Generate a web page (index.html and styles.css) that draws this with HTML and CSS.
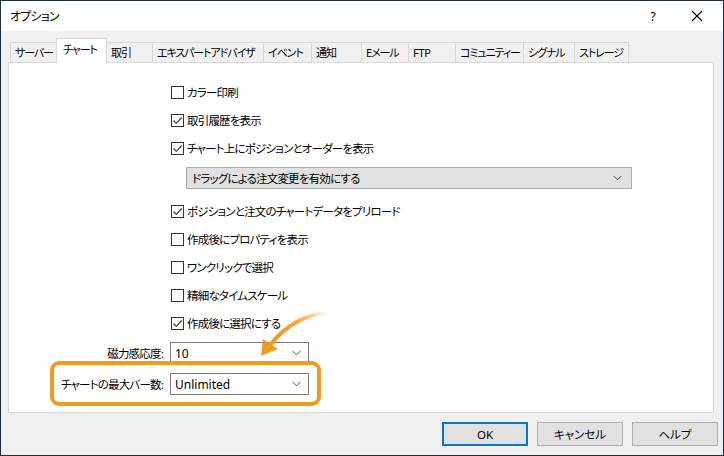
FILE: index.html
```html
<!DOCTYPE html>
<html lang="ja">
<head>
<meta charset="utf-8">
<title>オプション</title>
<link rel="stylesheet" href="styles.css">
</head>
<body>
<div class="window">
  <div class="titlebar">
    <span class="title">オプション</span>
    <span class="tb-help">?</span>
    <span class="tb-close"><svg width="12" height="12" viewBox="0 0 12 12"><path d="M1 1L11 11M11 1L1 11" stroke="#000" stroke-width="1.1" fill="none"/></svg></span>
  </div>
  <div class="content">
    <div class="tabs">
      <div class="tab t-server">サーバー</div>
      <div class="tab t-chart active">チャート</div>
      <div class="tab t-trade">取引</div>
      <div class="tab t-ea">エキスパートアドバイザ</div>
      <div class="tab t-event">イベント</div>
      <div class="tab t-notify">通知</div>
      <div class="tab t-mail">Eメール</div>
      <div class="tab t-ftp">FTP</div>
      <div class="tab t-comm">コミュニティー</div>
      <div class="tab t-signal">シグナル</div>
      <div class="tab t-storage">ストレージ</div>
    </div>
    <div class="panel">
      <div class="checks">
        <div class="row"><span class="box"></span><span>カラー印刷</span></div>
        <div class="row"><span class="box"><svg viewBox="0 0 11 11" width="11" height="11"><path d="M1.5 5.5L4.2 8.3L9.8 2.5" stroke="#333" stroke-width="1.1" fill="none"/></svg></span><span>取引履歴を表示</span></div>
        <div class="row"><span class="box"><svg viewBox="0 0 11 11" width="11" height="11"><path d="M1.5 5.5L4.2 8.3L9.8 2.5" stroke="#333" stroke-width="1.1" fill="none"/></svg></span><span>チャート上にポジションとオーダーを表示</span></div>
        <div class="combo wide"><span>ドラッグによる注文変更を有効にする</span><svg class="chev" width="9" height="6" viewBox="0 0 9 6"><path d="M0.5 0.8L4.5 4.8L8.5 0.8" stroke="#555" stroke-width="1" fill="none"/></svg></div>
        <div class="row"><span class="box"><svg viewBox="0 0 11 11" width="11" height="11"><path d="M1.5 5.5L4.2 8.3L9.8 2.5" stroke="#333" stroke-width="1.1" fill="none"/></svg></span><span>ポジションと注文のチャートデータをプリロード</span></div>
        <div class="row"><span class="box"></span><span>作成後にプロパティを表示</span></div>
        <div class="row"><span class="box"></span><span>ワンクリックで選択</span></div>
        <div class="row"><span class="box"></span><span>精細なタイムスケール</span></div>
        <div class="row"><span class="box"><svg viewBox="0 0 11 11" width="11" height="11"><path d="M1.5 5.5L4.2 8.3L9.8 2.5" stroke="#333" stroke-width="1.1" fill="none"/></svg></span><span>作成後に選択にする</span></div>
      </div>
      <div class="fields">
        <div class="field">
          <span class="label">磁力感応度:</span>
          <div class="select"><span>10</span><svg class="chev" width="9" height="6" viewBox="0 0 9 6"><path d="M0.5 0.8L4.5 4.8L8.5 0.8" stroke="#555" stroke-width="1" fill="none"/></svg></div>
        </div>
        <div class="field highlighted">
          <span class="label">チャートの最大バー数:</span>
          <div class="select"><span>Unlimited</span><svg class="chev" width="9" height="6" viewBox="0 0 9 6"><path d="M0.5 0.8L4.5 4.8L8.5 0.8" stroke="#555" stroke-width="1" fill="none"/></svg></div>
          <div class="hl-frame"></div>
        </div>
      </div>
      <svg class="arrow" width="100" height="70" viewBox="0 0 100 70">
        <defs>
          <linearGradient id="ag" gradientUnits="userSpaceOnUse" x1="88" y1="11" x2="38" y2="34">
            <stop offset="0" stop-color="#f39a1e" stop-opacity="0"/>
            <stop offset="0.55" stop-color="#f39a1e" stop-opacity="0.85"/>
            <stop offset="1" stop-color="#f39a1e" stop-opacity="1"/>
          </linearGradient>
        </defs>
        <path d="M88 11 Q52 16 31 43" stroke="url(#ag)" stroke-width="4" fill="none" stroke-linecap="round"/>
        <polygon points="21,55 23,38 38,48" fill="#f39a1e"/>
      </svg>
    </div>
    <div class="buttons">
      <button class="btn default">OK</button>
      <button class="btn">キャンセル</button>
      <button class="btn">ヘルプ</button>
    </div>
  </div>
</div>
</body>
</html>
```

FILE: styles.css
```css
* { box-sizing: border-box; }
html, body { margin: 0; padding: 0; }
body {
  font-family: "Noto Sans", "Noto Sans CJK JP", sans-serif;
  font-size: 11.5px;
  letter-spacing: -0.8px;
  color: #000;
  font-feature-settings: "palt";
  background: #fff;
}
.window {
  width: 724px;
  height: 456px;
  border: 1px solid #1c2e40;
  background: #f0f0f0;
  display: flex;
  flex-direction: column;
}
.titlebar {
  height: 30px;
  background: #fff;
  display: flex;
  align-items: center;
  padding-left: 9px;
  flex: none;
}
.title { flex: 1; font-size: 12px; }
.tb-help { width: 14px; text-align: center; margin-right: 31px; font-size: 12px; letter-spacing: 0; }
.tb-close { width: 12px; height: 12px; margin-right: 20px; display: flex; }
.content {
  flex: 1;
  display: flex;
  flex-direction: column;
  padding: 7px 0 0 7px;
}
.tabs {
  display: flex;
  align-items: flex-end;
  height: 24px;
  margin-left: 2px;
  position: relative;
  z-index: 2;
}
.tab {
  height: 20px;
  padding: 0 3px 0 4px;
  border-top: 1px solid #d9d9d9;
  border-left: 1px solid #d9d9d9;
  line-height: 19px;
  white-space: nowrap;
  background: #f0f0f0;
  flex: none;
  font-size: 11px;
  letter-spacing: -1.1px;
}
.tab:last-child { border-right: 1px solid #d9d9d9; }
.t-server { min-width: 46px; }
.t-chart { min-width: 51px; }
.t-trade { min-width: 46px; }
.t-ea { min-width: 111px; }
.t-event { min-width: 48px; }
.t-notify { min-width: 50px; }
.t-mail { min-width: 47px; }
.t-ftp { min-width: 47px; letter-spacing: -0.3px; }
.t-comm { min-width: 68px; }
.t-signal { min-width: 51px; }
.t-storage { min-width: 55px; }
.tab.active {
  background: #fff;
  line-height: 22px;
  padding-left: 6px;
  border-right: 1px solid #d9d9d9;
  margin-right: -1px;
  position: relative;
  z-index: 3;
  margin-bottom: -1px;
  height: 25px;
}
.panel {
  width: 706px;
  height: 351px;
  background: #fff;
  border: 1px solid #d9d9d9;
  position: relative;
  padding-top: 15px;
  flex: none;
}
.checks {
  padding-left: 162px;
  display: flex;
  flex-direction: column;
}
.row {
  height: 28px;
  display: flex;
  align-items: center;
  white-space: nowrap;
}
.box {
  width: 13px;
  height: 13px;
  border: 1px solid #333;
  background: #fff;
  margin-right: 3px;
  display: flex;
  align-items: center;
  justify-content: center;
  flex: none;
}
.combo, .select {
  display: flex;
  align-items: center;
  justify-content: space-between;
  white-space: nowrap;
}
.combo.wide {
  margin: 5px 0 8px 15px;
  width: 446px;
  height: 22px;
  background: #e1e1e1;
  border: 1px solid #adadad;
  padding: 0 9px 0 5px;
}
.fields {
  display: flex;
  flex-direction: column;
  gap: 9px;
  margin-top: 5px;
}
.field {
  display: grid;
  grid-template-columns: 154px 139px;
  column-gap: 7px;
  align-items: center;
  position: relative;
}
.label { text-align: right; white-space: nowrap; }
.select {
  height: 22px;
  border: 1px solid #7a7a7a;
  background: #fff;
  padding: 0 7px 0 4px;
  font-size: 12px;
  letter-spacing: 0;
}
.hl-frame {
  position: absolute;
  left: 41px;
  top: -12px;
  width: 271px;
  height: 45px;
  border: 4px solid #f39a1e;
  border-radius: 9px;
  pointer-events: none;
}
.arrow {
  position: absolute;
  left: 231px;
  top: 238px;
  pointer-events: none;
}
.buttons {
  display: flex;
  justify-content: flex-end;
  gap: 9px;
  margin-top: 9px;
  padding-right: 5px;
}
.btn {
  width: 86px;
  height: 24px;
  background: #e1e1e1;
  border: 1px solid #adadad;
  font: inherit;
  color: #000;
  padding: 0;
}
.btn.default { border: 2px solid #0078d7; }
```
